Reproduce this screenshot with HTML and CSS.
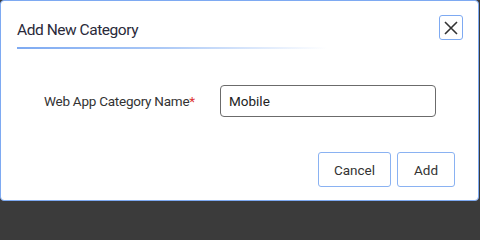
FILE: index.html
```html
<!DOCTYPE html>
<html lang="en">
<head>
<meta charset="utf-8">
<title>Add New Category</title>
<link rel="stylesheet" href="styles.css">
</head>
<body>
<div class="dialog">
  <div class="header">
    <div class="title-wrap">
      <h1 class="title">Add New Category</h1>
      <div class="title-line"></div>
    </div>
    <button class="close" aria-label="Close">
      <svg width="14" height="14" viewBox="0 0 14 14"><path d="M1 1 L13 13 M13 1 L1 13" stroke="#333" stroke-width="1.6" fill="none"/></svg>
    </button>
  </div>
  <div class="body">
    <label class="label" for="name">Web App Category Name<span class="req">*</span></label>
    <input class="input" id="name" type="text" value="Mobile">
  </div>
  <div class="footer">
    <button class="btn">Cancel</button>
    <button class="btn btn-add">Add</button>
  </div>
</div>
</body>
</html>
```

FILE: styles.css
```css
html, body {
  margin: 0;
  padding: 0;
  background: #3b3b3b;
  width: 480px;
  height: 202px;
  overflow: hidden;
}
.dialog {
  box-sizing: border-box;
  width: 479px;
  height: 201px;
  background: #fff;
  border: 1px solid #7eaaf2;
  border-radius: 4px;
  font-family: Roboto, "Open Sans", sans-serif;
  color: #333;
  display: flex;
  flex-direction: column;
}
.header {
  display: flex;
  justify-content: space-between;
  align-items: flex-start;
  padding: 15px 15px 0 16px;
}
.title-wrap {
  width: 310px;
}
.title {
  margin: 0;
  font-size: 15.5px;
  font-weight: 400;
  line-height: 20px;
  letter-spacing: -0.45px;
  padding-top: 4px;
  color: #2a2a3a;
}
.title-line {
  margin-top: 7px;
  height: 2px;
  background: linear-gradient(to right, #7eaaf2 0%, #a9c7f6 45%, rgba(255,255,255,0) 100%);
}
.close {
  box-sizing: border-box;
  width: 24px;
  height: 25px;
  margin-top: -1px;
  padding: 0;
  border: 1px solid #7eaaf2;
  border-radius: 3px;
  background: #fff;
  display: flex;
  align-items: center;
  justify-content: center;
}
.body {
  display: flex;
  align-items: center;
  padding: 36px 0 0 43px;
}
.label {
  width: 176px;
  font-size: 13.5px;
  letter-spacing: -0.25px;
  color: #333;
}
.req {
  color: #d33;
}
.input {
  box-sizing: border-box;
  width: 216px;
  height: 32px;
  border: 1px solid #6b6b6b;
  border-radius: 4px;
  padding: 0 8px;
  font-family: Roboto, "Open Sans", sans-serif;
  font-size: 13.5px;
  color: #222;
  outline: none;
}
.footer {
  display: flex;
  justify-content: flex-end;
  gap: 6px;
  padding: 35px 23px 0 0;
}
.btn {
  box-sizing: border-box;
  height: 35px;
  width: 73px;
  border: 1px solid #8ab2f2;
  border-radius: 3px;
  background: #fff;
  font-family: Roboto, "Open Sans", sans-serif;
  font-size: 13.5px;
  color: #333;
}
.btn-add {
  width: 58px;
}
```
